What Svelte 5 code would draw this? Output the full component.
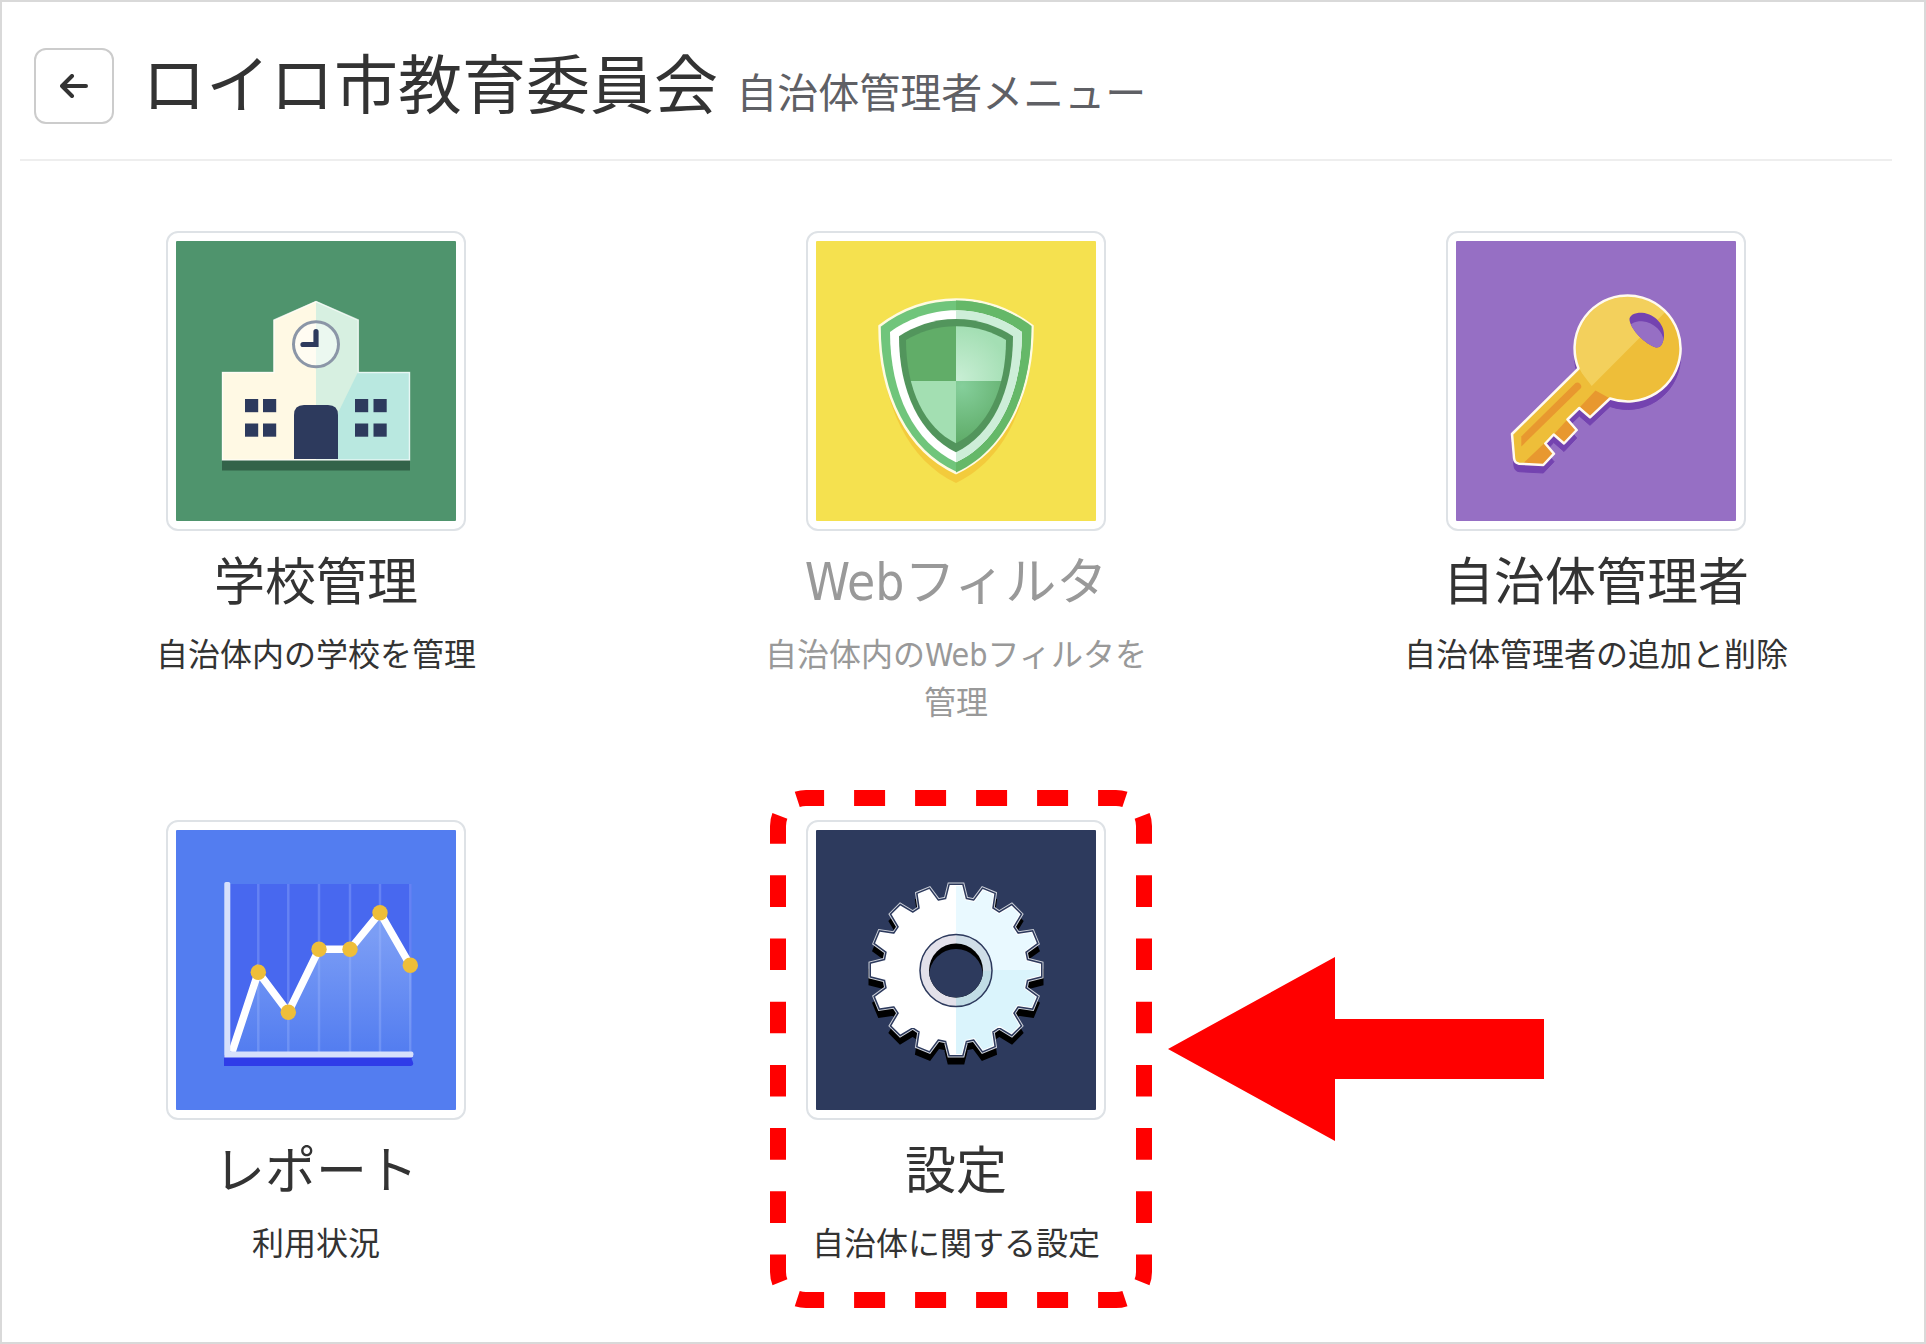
<script>
  // every picture is drawn on a 280 x 280 square
  const menus = [
    { id: "school", title: "学校管理", text: "自治体内の学校を管理", color: "#4f946d" },
    { id: "filter", title: "Webフィルタ", text: "自治体内のWebフィルタを管理", color: "#f5e14f", disabled: true },
    { id: "admin", title: "自治体管理者", text: "自治体管理者の追加と削除", color: "#966fc4" },
    { id: "report", title: "レポート", text: "利用状況", color: "#537df0" },
    { id: "settings", title: "設定", text: "自治体に関する設定", color: "#2d3a5d", marked: true },
  ];

  const windows = [
    [69, 158],
    [87, 158],
    [69, 182.5],
    [87, 182.5],
    [179, 158],
    [197.5, 158],
    [179, 182.5],
    [197.5, 182.5],
  ];

  const points = [
    [82.3, 142.3],
    [112.3, 182.3],
    [143, 119.3],
    [174, 119.3],
    [204, 82.7],
    [234.3, 135.3],
  ];
  const line = points.map((p) => p.join(" ")).join("L");

  // dashes of the red frame, shorter ones at the corners
  const rowDash = "0 35 27 30 31 30 31 30 31 30 31 30 27 99";
  const sideDash = `0 33.6 28 ${"31.6 ".repeat(13)}28 99`;

  // shield outline: top of the arch, half width, height of the corners, tip
  function shield(top, half, corner, tip) {
    const h = tip - corner;
    const y1 = corner + h * 0.475;
    const y2 = corner + h * 0.85;
    return `M140 ${top}C${140 + half * 0.4} ${top} ${140 + half * 0.75} ${top + (corner - top) * 0.45} ${140 + half} ${corner}
      C${140 + half} ${y1} ${140 + half * 0.63} ${y2} 140 ${tip}
      C${140 - half * 0.63} ${y2} ${140 - half} ${y1} ${140 - half} ${corner}
      C${140 - half * 0.75} ${top + (corner - top) * 0.45} ${140 - half * 0.4} ${top} 140 ${top}Z`;
  }

  // gear with 16 teeth
  function gear() {
    const tooth = [
      [-9, -70],
      [-5.5, -84],
      [5.5, -84],
      [9, -70],
    ];
    const out = [];
    for (let i = 0; i < 16; i++) {
      const a = (i * Math.PI) / 8;
      for (const [x, y] of tooth) {
        const px = 140 + x * Math.cos(a) - y * Math.sin(a);
        const py = 140 + x * Math.sin(a) + y * Math.cos(a);
        out.push(`${px.toFixed(2)} ${py.toFixed(2)}`);
      }
    }
    return "M" + out.join("L") + "Z";
  }

  const gearPath = gear();
  const keyPath =
    "M122.5 127.5L56 193L58 217Q58.500 222 63 222.700L87.300 224L98 212.700L89.300 202.500L97.700 193.500L108 202.500L120.700 189L111.500 178.500L123.300 167L134 176.300L154 157.500A53 53 0 1 0 122.500 127.500Z";
  const keyHole =
    "M173.500 79C173 74 179 71.500 186 71.700C200 73 209 85 208 95C207.500 102 205 107 200 106.500C189 103 175 89 173.500 79Z";
</script>

<main class="page">
  <header class="page-header">
    <button class="back" type="button" aria-label="戻る">
      <svg width="28" height="24" viewBox="0 0 28 24">
        <path d="M26 12H2M12 2L2 12L12 22" />
      </svg>
    </button>
    <h1>ロイロ市教育委員会 <small>自治体管理者メニュー</small></h1>
  </header>

  <nav class="menu">
    {#each menus as menu (menu.id)}
      <a class="card" class:disabled={menu.disabled} href="#{menu.id}" aria-disabled={menu.disabled}>
        <span class="thumb">
          <svg viewBox="0 0 280 280" aria-hidden="true">
            <rect width="280" height="280" rx="1" fill={menu.color} />
            {#if menu.id === "school"}
              <rect x="46" y="219" width="188" height="10.5" fill="#336349" />
              <path d="M46 131H97.500V79L140 60V219H46Z" fill="#fff9e4" />
              <path d="M140 60L182.500 79V131L234 131V219H140Z" fill="#d7f0e1" />
              <path d="M182 131H234V219H161V174Z" fill="#b9e8e0" />
              <path
                d="M46.500 219V131.500H98V79L140 60.500L182.300 79V131.500H233.500V219Z"
                fill="none"
                stroke="#fff"
                stroke-opacity="0.65"
                stroke-width="1.500"
              />
              <circle cx="140" cy="103.300" r="22.500" fill="#fff" fill-opacity="0.5" stroke="#8b96a7" stroke-width="3" />
              <path
                d="M140 90.500V103.500H127"
                fill="none"
                stroke="#2d3a5d"
                stroke-width="5.200"
                stroke-linecap="round"
              />
              <path d="M118 218V174Q118 164 128 164H152Q162 164 162 174V218Z" fill="#2d3a5d" />
              {#each windows as [x, y]}
                <rect {x} {y} width="13.200" height="13.200" fill="#2d3a5d" />
              {/each}
            {:else if menu.id === "filter"}
              <clipPath id="shield-right"><rect x="140" width="140" height="280" /></clipPath>
              <clipPath id="shield-core"><path d={shield(85.3, 50, 99, 202.3)} /></clipPath>
              <radialGradient id="shield-light" gradientUnits="userSpaceOnUse" cx="142" cy="138" r="52">
                <stop offset="0" stop-color="#c8eed4" />
                <stop offset="1" stop-color="#a4dfb4" />
              </radialGradient>
              <radialGradient id="shield-dark" gradientUnits="userSpaceOnUse" cx="146" cy="145" r="58">
                <stop offset="0" stop-color="#85cf9b" />
                <stop offset="1" stop-color="#5eab67" />
              </radialGradient>
              <path d={shield(68, 75, 94, 242)} fill="#f3cb3c" />
              <path d={shield(58.5, 76.5, 85, 232)} fill="#70c57b" stroke="#fffbe0" stroke-width="2.500" />
              <path d={shield(59.5, 75.5, 85, 231.5)} fill="#65b868" clip-path="url(#shield-right)" />
              <path d={shield(69.3, 66, 91, 221.3)} fill="#fff" />
              <path d={shield(69.3, 66, 91, 221.3)} fill="#cdeed8" clip-path="url(#shield-right)" />
              <path d={shield(78, 57, 95.3, 211.3)} fill="#52955c" />
              <g clip-path="url(#shield-core)">
                <rect x="80" y="80" width="60" height="60" fill="#61ad68" />
                <rect x="140" y="80" width="60" height="60" fill="url(#shield-light)" />
                <rect x="80" y="140" width="60" height="70" fill="#a3dfb2" />
                <rect x="140" y="140" width="60" height="70" fill="url(#shield-dark)" />
              </g>
            {:else if menu.id === "admin"}
              <clipPath id="key-hole"><path d={keyHole} /></clipPath>
              <clipPath id="key-head"><circle cx="172.300" cy="108" r="52.500" /></clipPath>
              <path d={keyPath} transform="translate(0 8)" fill="#7443b0" stroke="#7443b0" stroke-linejoin="round" />
              <path d={keyPath} fill="#eebe39" />
              <path d="M139.500 149.500L154 157.500L134 176.300L124 166Z" fill="#e8982f" />
              <path d="M110.500 179.500L120.700 189L108 202.500L98.500 192.500Z" fill="#e8982f" />
              <path d="M88 202.500L98 212.700L87.300 224L67 222.500Z" fill="#e8982f" />
              <path d="M65.300 195.500L119.500 142A4 4 0 0 1 125 147L65.300 205.500Z" fill="#e8982f" />
              <path d="M100 20H260L135.700 145L118 122Z" fill="#f3d05c" clip-path="url(#key-head)" />
              <path d={keyPath} fill="none" stroke="#fffaf0" stroke-width="2.500" stroke-linejoin="round" />
              <path d={keyHole} fill="#7443b0" />
              <g clip-path="url(#key-hole)">
                <path d={keyHole} transform="translate(0 8.500)" fill="#966fc4" />
              </g>
            {:else if menu.id === "report"}
              <linearGradient id="area" gradientUnits="userSpaceOnUse" x1="0" y1="83" x2="0" y2="222">
                <stop offset="0.150" stop-color="#7b9df5" />
                <stop offset="1" stop-color="#537df0" />
              </linearGradient>
              <path d="M48 225H238L235.500 229Q240 236 233 236H48Z" fill="#2f3ce8" />
              <path d="M54 54H235.500V222H54Z" fill="#4868ef" />
              <path d="M54 222L{line}L235.500 137V222Z" fill="url(#area)" />
              {#each points as [x]}
                <path d="M{x} 54V222" stroke="#a9c0ff" stroke-opacity="0.300" stroke-width="2.500" />
              {/each}
              <path d="M56 222L{line}" fill="none" stroke="#fff" stroke-width="7.500" />
              <path d="M48.300 227.500V53.500Q48.300 52 50 52H52.500Q54.300 52 54.300 53.500V221.500H235.500Q237.500 221.500 237.500 224.500T235.500 227.500Z" fill="#d6e0fb" />
              {#each points as [cx, cy]}
                <circle {cx} {cy} r="7.700" fill="#eebe39" />
              {/each}
            {:else}
              <clipPath id="gear"><path d={gearPath} /></clipPath>
              <clipPath id="gear-hole"><circle cx="140" cy="140.500" r="27" /></clipPath>
              <path d={gearPath} transform="translate(0 7)" stroke="#000" stroke-width="7" />
              <path d={gearPath} fill="#fff" stroke="#ccd0d8" stroke-width="7" />
              <path d={gearPath} fill="#fff" stroke="#2d3a5d" stroke-width="5" />
              <path d={gearPath} fill="#fff" stroke="#fff" stroke-width="2" />
              <g clip-path="url(#gear)">
                <rect x="140" y="50" width="95" height="90" fill="#e9f9ff" />
                <rect x="140" y="140" width="95" height="95" fill="#daf4fc" />
              </g>
              <circle cx="140" cy="140.500" r="36.500" fill="#e3e1ea" />
              <path d="M140 104A36.500 36.500 0 0 1 176.500 140.500H140Z" fill="#d0dee8" />
              <path d="M176.500 140.500A36.500 36.500 0 0 1 140 177V140.500Z" fill="#c1dde6" />
              <circle cx="140" cy="140.500" r="36" fill="none" stroke="#2d3a5d" stroke-width="1.500" />
              <circle cx="140" cy="140.500" r="27" fill="#000" />
              <circle cx="140" cy="146" r="27" fill="#2d3a5d" clip-path="url(#gear-hole)" />
            {/if}
          </svg>
        </span>
        <span class="title">{menu.title}</span>
        <span class="text">{menu.text}</span>

        {#if menu.marked}
          <svg class="frame" viewBox="0 0 382 518" aria-hidden="true">
            <path d="M8 36A28 28 0 0 1 36 8H346A28 28 0 0 1 374 36" stroke-dasharray={rowDash} />
            <path d="M8 482A28 28 0 0 0 36 510H346A28 28 0 0 0 374 482" stroke-dasharray={rowDash} />
            <path d="M36 8A28 28 0 0 0 8 36V482A28 28 0 0 0 36 510" stroke-dasharray={sideDash} />
            <path d="M346 8A28 28 0 0 1 374 36V482A28 28 0 0 1 346 510" stroke-dasharray={sideDash} />
          </svg>
          <svg class="arrow" viewBox="0 0 376 184" aria-hidden="true">
            <path d="M0 92L167 0V62H376V122H167V184Z" />
          </svg>
        {/if}
      </a>
    {/each}
  </nav>
</main>

<style>
  :global(body) {
    margin: 0;
    background: #fff;
  }

  .page {
    box-sizing: border-box;
    min-height: 100vh;
    padding: 0 32px 0 18px;
    border: 2px solid #d9d9d9;
    color: #333;
    font-family: "DejaVu Sans Condensed", "Noto Sans CJK JP", sans-serif;
  }

  .page-header {
    display: flex;
    align-items: center;
    gap: 28px;
    padding: 46px 14px 35px;
    border-bottom: 2px solid #eee;
  }

  .back {
    display: flex;
    align-items: center;
    justify-content: center;
    width: 80px;
    height: 76px;
    padding: 0;
    border: 2px solid #ccc;
    border-radius: 12px;
    background: #fff;
    cursor: pointer;
  }

  .back path {
    fill: none;
    stroke: #333;
    stroke-width: 4;
    stroke-linecap: round;
    stroke-linejoin: round;
  }

  h1 {
    margin: 0;
    font-size: 64px;
    font-weight: 400;
    line-height: 76px;
  }

  small {
    color: #5f6065;
    font-size: 41px;
    line-height: 1;
  }

  .menu {
    display: grid;
    grid-template-columns: repeat(3, 1fr);
    justify-items: center;
    gap: 93px 48px;
    padding: 70px 0 24px;
  }

  .card {
    position: relative;
    display: flex;
    flex-direction: column;
    align-items: center;
    width: 400px;
    color: #333;
    text-align: center;
    text-decoration: none;
  }

  .disabled {
    color: #999;
    cursor: default;
  }

  .thumb {
    display: flex;
    box-sizing: border-box;
    width: 300px;
    padding: 8px;
    border: 2px solid #dee2e6;
    border-radius: 12px;
    background: #fff;
  }

  .thumb svg {
    width: 100%;
  }

  .title {
    margin-top: 22px;
    font-size: 51px;
    line-height: 60px;
  }

  .text {
    margin-top: 18px;
    font-size: 32px;
    line-height: 48px;
  }

  /* red marks round the menu that is being pointed out */
  .frame {
    position: absolute;
    top: -30px;
    left: 14px;
    width: 382px;
    fill: none;
    stroke: #f00;
    stroke-width: 16;
    pointer-events: none;
  }

  .arrow {
    position: absolute;
    top: 137px;
    left: 412px;
    width: 376px;
    fill: #f00;
    pointer-events: none;
  }
</style>
